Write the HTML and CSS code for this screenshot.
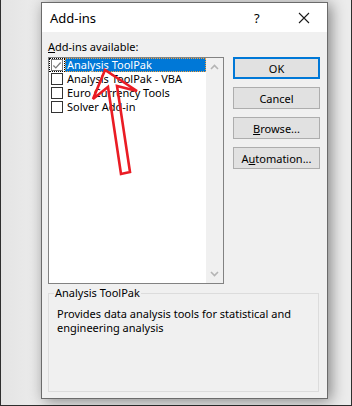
FILE: index.html
```html
<!DOCTYPE html>
<html>
<head>
<meta charset="utf-8">
<link rel="stylesheet" href="styles.css">
</head>
<body>
<div class="frame">
  <div class="dialog">
    <div class="titlebar">
      <span class="title">Add-ins</span>
      <span class="help">?</span>
      <svg class="close" width="12" height="12" viewBox="0 0 12 12"><path d="M1 1L11 11M11 1L1 11" stroke="#1a1a1a" stroke-width="1.1" fill="none"/></svg>
    </div>
    <div class="body">
      <div class="grid">
        <div class="label"><u>A</u>dd-ins available:</div>
        <div class="listbox">
          <div class="items">
            <div class="row">
              <span class="cbwrap focus"><span class="cb checked"><svg width="11" height="11" viewBox="0 0 11 11"><path d="M1.5 5.5L4.2 8.2L9.5 2.2" stroke="#7a7a7a" stroke-width="1.3" fill="none"/></svg></span></span>
              <span class="text sel">Analysis ToolPak</span>
            </div>
            <div class="row"><span class="cbwrap"><span class="cb"></span></span><span class="text">Analysis ToolPak - VBA</span></div>
            <div class="row"><span class="cbwrap"><span class="cb"></span></span><span class="text">Euro Currency Tools</span></div>
            <div class="row"><span class="cbwrap"><span class="cb"></span></span><span class="text">Solver Add-in</span></div>
          </div>
          <div class="scroll">
            <svg width="9" height="6" viewBox="0 0 9 6"><path d="M1 5L4.5 1.5L8 5" stroke="#b4b4b4" stroke-width="1.6" fill="none"/></svg>
            <svg width="9" height="6" viewBox="0 0 9 6"><path d="M1 1L4.5 4.5L8 1" stroke="#b4b4b4" stroke-width="1.6" fill="none"/></svg>
          </div>
        </div>
        <div class="buttons">
          <div class="btn default">OK</div>
          <div class="btn">Cancel</div>
          <div class="btn"><u>B</u>rowse...</div>
          <div class="btn">A<u>u</u>tomation...</div>
        </div>
      </div>
      <fieldset class="group">
        <legend>Analysis ToolPak</legend>
        <p class="desc">Provides data analysis tools for statistical and engineering analysis</p>
      </fieldset>
      <svg class="arrow" width="60" height="124" viewBox="0 0 60 124">
        <polygon points="23,9 11,38 26,26 39,113 48,111 35,25 55,30" fill="none" stroke="#ea1c24" stroke-width="2.6" stroke-linejoin="miter"/>
      </svg>
    </div>
  </div>
</div>
</body>
</html>
```
FILE: styles.css
```css
* { box-sizing: border-box; }
html, body { margin: 0; padding: 0; }
body {
  width: 352px;
  height: 406px;
  overflow: hidden;
  font-family: "Noto Sans", "Open Sans", sans-serif;
  font-size: 11px;
  color: #000;
}
.frame {
  width: 352px;
  height: 406px;
  border-left: 1px solid #2e2e2e;
  border-right: 1px solid #2e2e2e;
  border-bottom: 1px solid #2e2e2e;
  background: linear-gradient(to right, #e4e4e4 0, #ececec 40px, #ececec 100%);
  padding: 2px 0 0 40px;
}
.dialog {
  width: 287px;
  height: 397px;
  border: 1px solid #6b6b6b;
  background: #f0f0f0;
  box-shadow: 3px 2px 14px rgba(0,0,0,0.45);
  display: flex;
  flex-direction: column;
  position: relative;
}
.titlebar {
  height: 29px;
  background: #ffffff;
  display: flex;
  align-items: center;
  padding: 0 0 0 8px;
  font-size: 13px;
}
.title { flex: 1; }
.help { width: 14px; margin-right: 30px; font-size: 13px; }
.close { margin-right: 17px; }
.body {
  flex: 1;
  padding: 8px 7px 0 6px;
}
.grid {
  display: grid;
  grid-template-columns: 176px 87px;
  column-gap: 9px;
  row-gap: 3px;
}
.label { line-height: 14px; grid-column: 1 / 3; }
.listbox {
  height: 227px;
  border: 1px solid #828282;
  background: #fff;
  display: flex;
}
.items { flex: 1; }
.row {
  height: 14px;
  display: flex;
  align-items: center;
}
.cbwrap {
  width: 16px;
  height: 14px;
  display: flex;
  align-items: center;
  justify-content: center;
}
.cbwrap.focus { outline: 1px dotted #000; outline-offset: -1px; }
.cb {
  width: 12px;
  height: 12px;
  border: 1px solid #333;
  background: #fff;
  display: flex;
  align-items: center;
  justify-content: center;
}
.cb.checked { border-color: #777; }
.text {
  padding: 0 2px;
  line-height: 14px;
  white-space: nowrap;
}
.text.sel {
  flex: 1;
  background: #0078d7;
  color: #fff;
  outline: 1px dotted #f7a23b;
  outline-offset: -1px;
}
.scroll {
  width: 17px;
  background: #f0f0f0;
  display: flex;
  flex-direction: column;
  justify-content: space-between;
  align-items: center;
  padding: 6px 0 6px;
}
.buttons {
  display: flex;
  flex-direction: column;
  gap: 8px;
}
.btn {
  height: 22px;
  border: 1px solid #adadad;
  background: #e1e1e1;
  display: flex;
  align-items: center;
  justify-content: center;
}
.btn.default { border: 2px solid #0078d7; }
.group {
  margin: 2px 1px 0 0;
  padding: 3px 8px 0 8px;
  height: 106px;
  border: 1px solid #dcdcdc;
}
.group legend {
  padding: 0 1px;
  margin-left: -3px;
  line-height: 14px;
}
.desc {
  margin: 0;
  line-height: 14px;
  padding-top: 4px;
}
.arrow {
  position: absolute;
  left: 40px;
  top: 58px;
}
```
